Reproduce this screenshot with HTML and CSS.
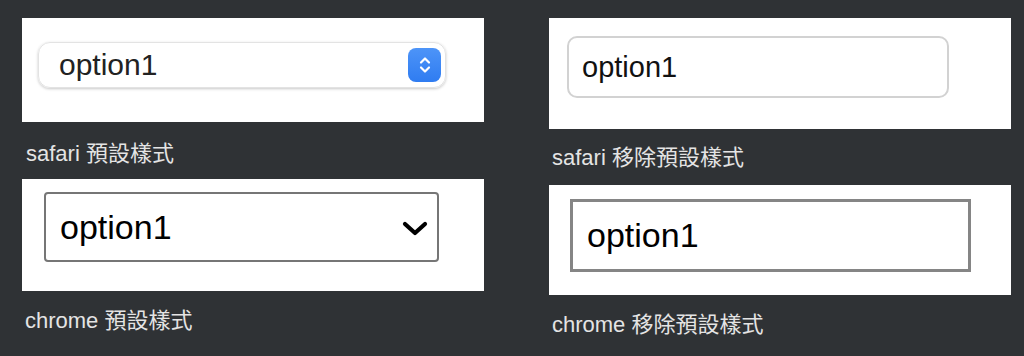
FILE: index.html
```html
<!DOCTYPE html>
<html lang="zh-Hant">
<head>
    <meta charset="UTF-8" />
    <meta name="viewport" content="width=device-width, initial-scale=1.0" />
    <title>select 預設樣式比較</title>
    <link rel="stylesheet" href="styles.css">
</head>
<body>
    <div class="col">
        <div class="shot shot-safari">
            <div class="safari-select">
                <span class="value">option1</span>
                <span class="stepper">
                    <svg width="14" height="22" viewBox="0 0 14 22">
                        <path d="M3 8.5 L7 4.5 L11 8.5 M3 13.5 L7 17.5 L11 13.5" fill="none" stroke="#fff" stroke-width="2.2" stroke-linecap="round" stroke-linejoin="round"/>
                    </svg>
                </span>
            </div>
        </div>
        <p class="caption cap-1">safari 預設樣式</p>

        <div class="shot shot-chrome">
            <div class="chrome-select">
                <span class="value">option1</span>
                <svg class="chevron" width="26" height="16" viewBox="0 0 26 16">
                    <path d="M3 3 L13 12 L23 3" fill="none" stroke="#000" stroke-width="4.2" stroke-linecap="round" stroke-linejoin="round"/>
                </svg>
            </div>
        </div>
        <p class="caption cap-3">chrome 預設樣式</p>
    </div>

    <div class="col">
        <div class="shot shot-safari-plain">
            <div class="safari-plain">option1</div>
        </div>
        <p class="caption cap-2">safari 移除預設樣式</p>

        <div class="shot shot-chrome-plain">
            <div class="chrome-plain">option1</div>
        </div>
        <p class="caption cap-4">chrome 移除預設樣式</p>
    </div>
</body>
</html>
```

FILE: styles.css
```css
body {
    margin: 0;
    padding: 18px 0 0 22px;
    background-color: #2f3235;
    font-family: "Liberation Sans", "Noto Sans CJK TC", sans-serif;
    display: flex;
    gap: 65px;
}
.col {
    width: 462px;
    display: flex;
    flex-direction: column;
}
.shot {
    background-color: #fff;
    box-sizing: border-box;
}
.caption {
    margin: 0;
    color: #e4e4e4;
    font-size: 22px;
    line-height: 26px;
}
.cap-1 { margin: 19px 0 12px 4px; }
.cap-2 { margin: 16px 0 14px 3px; }
.cap-3 { margin: 17px 0 0 3px; }
.cap-4 { margin: 17px 0 0 3px; }

/* safari default */
.shot-safari {
    height: 104px;
    padding: 24px 0 0 16px;
}
.safari-select {
    width: 408px;
    height: 46px;
    box-sizing: border-box;
    border: 1px solid #e3e3e3;
    border-radius: 12px;
    box-shadow: 0 1px 3px rgba(0,0,0,0.22);
    display: flex;
    align-items: center;
    justify-content: space-between;
    padding: 0 4px 0 20px;
}
.safari-select .value {
    font-size: 30px;
    color: #222;
}
.stepper {
    width: 33px;
    height: 34px;
    border-radius: 8px;
    background: linear-gradient(#4d94f8, #2f7cf1);
    display: flex;
    align-items: center;
    justify-content: center;
}

/* safari appearance: none */
.shot-safari-plain {
    height: 111px;
    padding: 18px 0 0 18px;
}
.safari-plain {
    width: 382px;
    height: 62px;
    box-sizing: border-box;
    border: 2px solid #d2d2d2;
    border-radius: 10px;
    padding: 0 0 0 13px;
    display: flex;
    align-items: center;
    font-size: 29px;
    color: #111;
}

/* chrome default */
.shot-chrome {
    height: 112px;
    padding: 13px 0 0 22px;
}
.chrome-select {
    width: 395px;
    height: 70px;
    box-sizing: border-box;
    border: 2px solid #767676;
    border-radius: 4px;
    display: flex;
    align-items: center;
    justify-content: space-between;
    padding: 0 9px 0 14px;
}
.chrome-select .value {
    font-size: 34px;
    color: #000;
}
.chevron {
    margin-top: 4px;
}

/* chrome appearance: none */
.shot-chrome-plain {
    height: 110px;
    padding: 14px 0 0 21px;
}
.chrome-plain {
    width: 401px;
    height: 73px;
    box-sizing: border-box;
    border: 3px solid #858585;
    padding: 0 0 0 14px;
    display: flex;
    align-items: center;
    font-size: 34px;
    color: #000;
}
```
